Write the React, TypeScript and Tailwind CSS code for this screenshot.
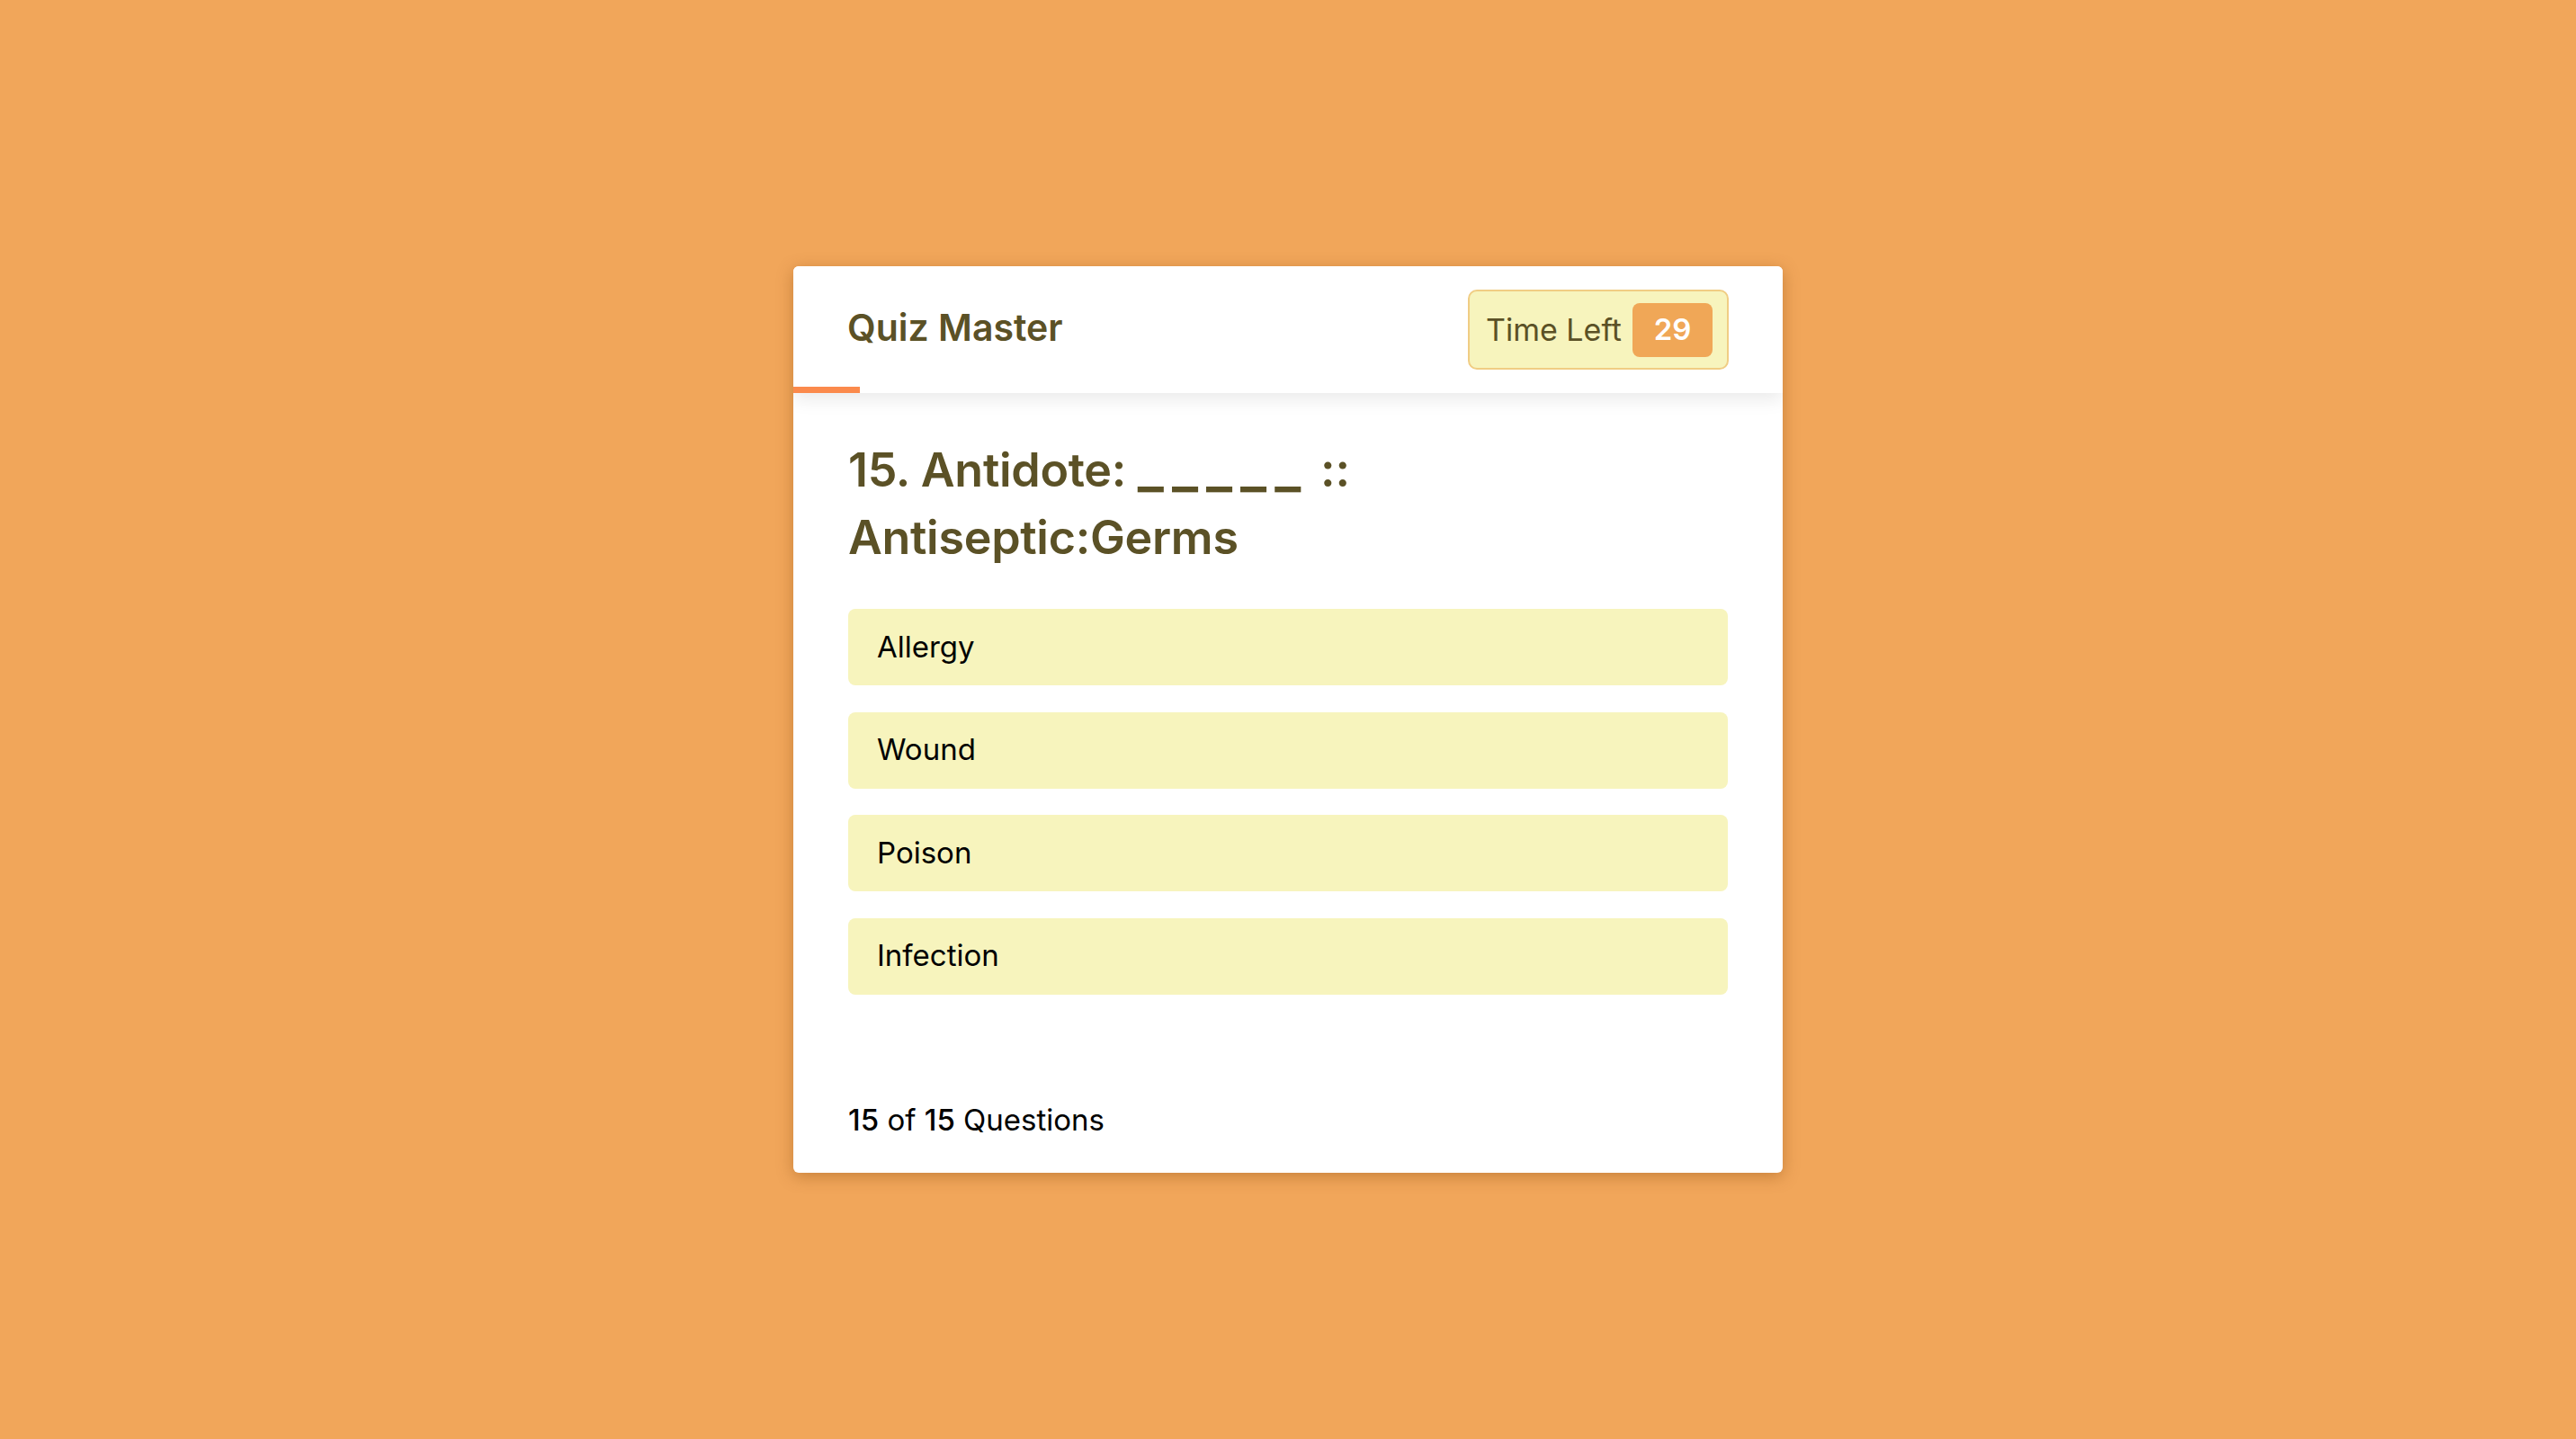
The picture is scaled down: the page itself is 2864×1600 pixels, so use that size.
import React from "react";

const options = ["Allergy", "Wound", "Poison", "Infection"];

export default function App() {
  return (
    <div
      className="w-full h-[1600px] bg-[#f1a65a] flex items-center justify-center"
      style={{ fontFamily: "Inter, 'Open Sans', sans-serif" }}
    >
      <div className="w-[1100px] h-[1008px] bg-white rounded-[6px] shadow-[0_4px_18px_rgba(120,60,0,0.35)] flex flex-col overflow-hidden">
        <div className="relative h-[141px] shrink-0 px-[60px] flex items-center justify-between shadow-[0_8px_18px_rgba(0,0,0,0.08)] z-10 bg-white">
          <div className="text-[41px] font-semibold text-[#5b5126] -mt-[4px]">Quiz Master</div>
          <div className="w-[290px] h-[89px] rounded-[10px] bg-[#f7f4bd] border-2 border-[#f0cd84] flex items-center justify-between pl-[18px] pr-[16px]">
            <span className="text-[34px] text-[#5b5126]">Time Left</span>
            <span className="w-[89px] h-[60px] rounded-[8px] bg-[#f0a757] text-white text-[33px] font-semibold flex items-center justify-center">
              29
            </span>
          </div>
          <div className="absolute left-0 bottom-0 w-[74px] h-[7px] bg-[#fb8a4c]"></div>
        </div>
        <div className="flex-1 flex flex-col px-[61px] pt-[48px]">
          <div className="text-[52px] leading-[75px] font-semibold text-[#5b5126] w-[640px] tracking-[-0.3px]">
            15. Antidote: <span className="text-[62px] leading-none tracking-[9px]">_____</span> :: Antiseptic:Germs
          </div>
          <div className="mt-[42px] flex flex-col gap-[29.5px]">
            {options.map((o) => (
              <div
                key={o}
                className="h-[85px] rounded-[8px] bg-[#f7f4bd] flex items-center px-[32px] text-[33px] text-black"
              >
                {o}
              </div>
            ))}
          </div>
          <div className="mt-auto pb-[33px] text-[33px] leading-[51px] text-black">
            <span className="font-medium">15</span> of <span className="font-medium">15</span> Questions
          </div>
        </div>
      </div>
    </div>
  );
}
